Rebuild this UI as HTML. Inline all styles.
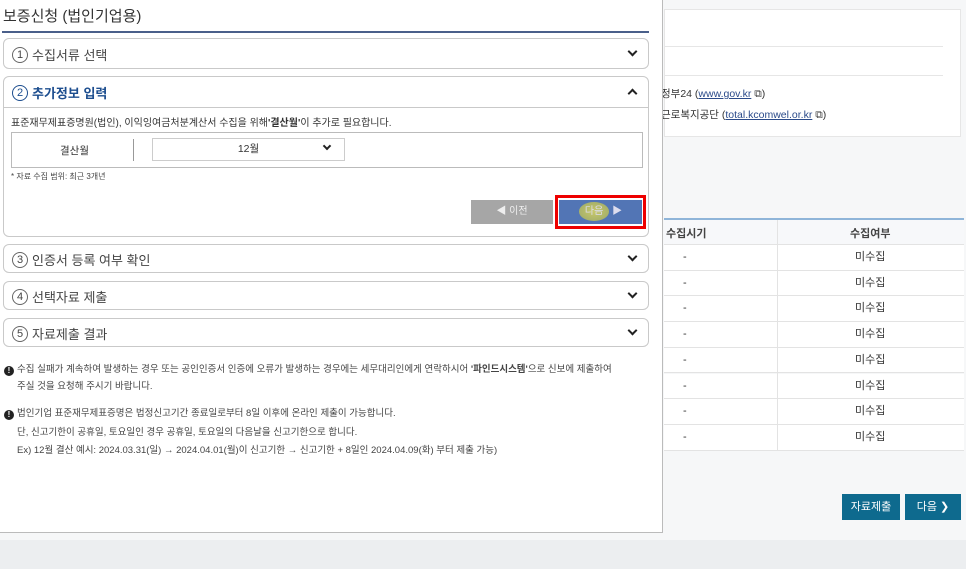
<!DOCTYPE html>
<html><head><meta charset="utf-8"><style>
*{box-sizing:border-box;margin:0;padding:0}
body{width:966px;height:569px;overflow:hidden;background:#f6f7f8;font-family:"Liberation Sans","Noto Sans CJK KR",sans-serif;position:relative;color:#333}
.a{position:absolute}
.card{left:664px;top:9px;width:297px;height:128px;background:#fff;border:1px solid #e6e6e6}
.modal{left:0;top:0;width:663px;height:533px;background:#fff;border-right:1px solid #bbb;border-bottom:1px solid #bbb}
.sec{left:3px;width:646px;border:1px solid #c9c9c9;border-radius:6px;background:#fff}
.sec .t{position:absolute;left:8px;top:6px;font-size:13px;color:#444;display:flex;align-items:center}
.num{display:inline-block;width:16px;height:16px;border:1px solid #666;border-radius:50%;font-size:11px;line-height:14px;text-align:center;margin-right:4px}
.chev{position:absolute;right:12px;top:9px;width:7px;height:7px;border-right:2px solid #222;border-bottom:2px solid #222;transform:rotate(45deg)}
.row{position:absolute;left:664px;width:300px;height:25.7px;border-bottom:1px solid #e3e3e3;background:#fff;font-size:11px;line-height:25px}
.row span{position:absolute;top:0}
.note{left:4px;font-size:9.5px;color:#444}
.ic{display:inline-block;width:10px;height:10px;border-radius:50%;background:#222;color:#fff;font-size:8px;line-height:10px;text-align:center;font-weight:bold;margin-right:3px;vertical-align:-1px}
</style></head><body>
<div class="a card">
<div class="a" style="left:0;top:36px;width:278px;border-top:1px solid #e6e6e6"></div>
<div class="a" style="left:0;top:65px;width:278px;border-top:1px solid #e6e6e6"></div>
<div class="a" style="left:-4px;top:76px;font-size:10.5px;color:#333">정부24 (<u style="color:#2a4a8a">www.gov.kr</u> ⧉)</div>
<div class="a" style="left:-4px;top:97px;font-size:10.5px;color:#333">근로복지공단 (<u style="color:#2a4a8a">total.kcomwel.or.kr</u> ⧉)</div>
</div>
<div class="a" style="left:664px;top:218px;width:300px;border-top:2px solid #8fb5d9;background:#f7f8fa;height:27px;border-bottom:1px solid #e3e3e3"></div>
<div class="a" style="left:666px;top:225px;font-size:11px;font-weight:bold;color:#444">수집시기</div>
<div class="a" style="left:850px;top:225px;font-size:11px;font-weight:bold;color:#444">수집여부</div>
<div class="row" style="top:245px"><span style="left:19px">-</span><span style="left:191px">미수집</span></div>
<div class="row" style="top:270.7px"><span style="left:19px">-</span><span style="left:191px">미수집</span></div>
<div class="row" style="top:296.4px"><span style="left:19px">-</span><span style="left:191px">미수집</span></div>
<div class="row" style="top:322.1px"><span style="left:19px">-</span><span style="left:191px">미수집</span></div>
<div class="row" style="top:347.8px"><span style="left:19px">-</span><span style="left:191px">미수집</span></div>
<div class="row" style="top:373.5px"><span style="left:19px">-</span><span style="left:191px">미수집</span></div>
<div class="row" style="top:399.2px"><span style="left:19px">-</span><span style="left:191px">미수집</span></div>
<div class="row" style="top:424.9px"><span style="left:19px">-</span><span style="left:191px">미수집</span></div>
<div class="a" style="left:777px;top:220px;height:230px;border-left:1px solid #e3e3e3"></div>
<div class="a" style="left:842px;top:494px;width:58px;height:26px;background:#0e6a8e;color:#fff;font-size:11px;text-align:center;line-height:26px">자료제출</div>
<div class="a" style="left:905px;top:494px;width:56px;height:26px;background:#0e6a8e;color:#fff;font-size:11px;text-align:center;line-height:26px">다음 ❯</div>
<div class="a" style="left:0;top:540px;width:966px;height:29px;background:#eceef0"></div>

<div class="a modal">
<div class="a" style="left:3px;top:5px;font-size:15px;color:#333">보증신청 (법인기업용)</div>
<div class="a" style="left:2px;top:31px;width:647px;border-top:2px solid #4a5f8a"></div>
<div class="a sec" style="top:38px;height:31px"><div class="t"><span class="num">1</span>수집서류 선택</div><div class="chev"></div></div>
<div class="a sec" style="top:76px;height:161px">
<div class="t" style="color:#1d4e8f;font-weight:bold"><span class="num" style="border-color:#1d4e8f;color:#1d4e8f;font-weight:normal">2</span>추가정보 입력</div>
<div class="chev" style="transform:rotate(-135deg);top:13px"></div>
<div class="a" style="left:0;top:30px;width:644px;border-top:1px solid #c9c9c9"></div>
<div class="a" style="left:7px;top:37px;font-size:10px;color:#333">표준재무제표증명원(법인), 이익잉여금처분계산서 수집을 위해<b>'결산월'</b>이 추가로 필요합니다.</div>
<div class="a" style="left:7px;top:55px;width:632px;height:36px;border:1px solid #bbb">
<div class="a" style="left:48px;top:10px;font-size:10.5px">결산월</div>
<div class="a" style="left:121px;top:6px;height:22px;border-left:1px solid #999"></div>
<div class="a" style="left:140px;top:5px;width:193px;height:23px;border:1px solid #ccc;font-size:10.5px;text-align:center;line-height:21px">12월</div>
<div class="a" style="left:312px;top:10px;width:6px;height:6px;border-right:2px solid #222;border-bottom:2px solid #222;transform:rotate(45deg)"></div>
</div>
<div class="a" style="left:7px;top:94px;font-size:8px;color:#444">* 자료 수집 범위: 최근 3개년</div>
<div class="a" style="left:467px;top:123px;width:82px;height:24px;background:#a6a6a6;color:#eee;font-size:10px;text-align:center;line-height:24px">◀ 이전</div>
<div class="a" style="left:555px;top:123px;width:83px;height:24px;background:#5275b5;color:#dde;font-size:10px;text-align:center;line-height:24px"><span style="background:radial-gradient(#c8c86a,#9aa86a);border-radius:50%;padding:4px 6px">다음</span> ▶</div>
<div class="a" style="left:551px;top:118px;width:91px;height:34px;border:3px solid #e00"></div>
</div>
<div class="a sec" style="top:244px;height:29px"><div class="t" style="top:5px"><span class="num">3</span>인증서 등록 여부 확인</div><div class="chev" style="top:8px"></div></div>
<div class="a sec" style="top:281px;height:29px"><div class="t" style="top:5px"><span class="num">4</span>선택자료 제출</div><div class="chev" style="top:8px"></div></div>
<div class="a sec" style="top:318px;height:29px"><div class="t" style="top:5px"><span class="num">5</span>자료제출 결과</div><div class="chev" style="top:8px"></div></div>
<div class="a note" style="top:361px"><span class="ic">!</span>수집 실패가 계속하여 발생하는 경우 또는 공인인증서 인증에 오류가 발생하는 경우에는 세무대리인에게 연락하시어 <b>'파인드시스템'</b>으로 신보에 제출하여</div>
<div class="a note" style="top:378px;left:17px">주실 것을 요청해 주시기 바랍니다.</div>
<div class="a note" style="top:405px"><span class="ic">!</span>법인기업 표준재무제표증명은 법정신고기간 종료일로부터 8일 이후에 온라인 제출이 가능합니다.</div>
<div class="a note" style="top:424px;left:17px">단, 신고기한이 공휴일, 토요일인 경우 공휴일, 토요일의 다음날을 신고기한으로 합니다.</div>
<div class="a note" style="top:442px;left:17px">Ex) 12월 결산 예시: 2024.03.31(일) → 2024.04.01(월)이 신고기한 → 신고기한 + 8일인 2024.04.09(화) 부터 제출 가능)</div>
</div>
</body></html>
